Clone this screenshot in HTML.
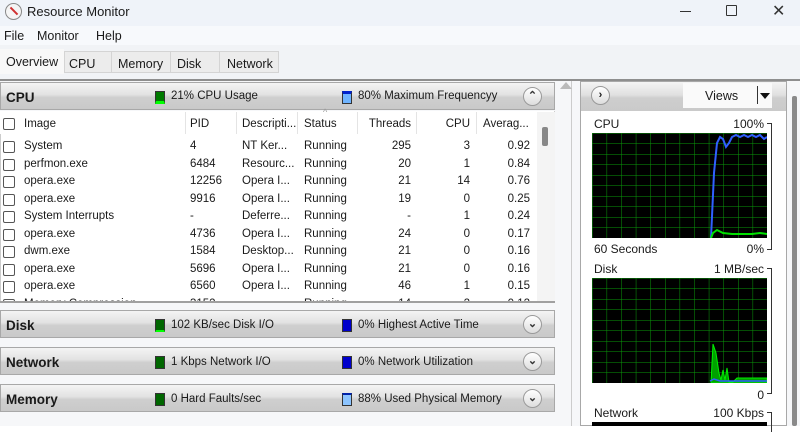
<!DOCTYPE html>
<html><head><style>
*{margin:0;padding:0;box-sizing:border-box}
body{width:800px;height:426px;overflow:hidden;background:#fff;font-family:"Liberation Sans",sans-serif;font-size:11.5px;color:#1a1a1a;position:relative}
.a{position:absolute;white-space:nowrap}
.hdr{position:absolute;left:0;width:555px;height:28px;border:1px solid #a8a8a8;background:linear-gradient(#f4f4f4,#e2e2e2 45%,#cfcfcf 55%,#c9c9c9);}
.hdr b{position:absolute;left:5px;top:7px;font-size:13.5px}
.sq{position:absolute;width:10px;height:13px;top:8px;border:1px solid #333}
.btn{position:absolute;right:12px;top:4px;width:19px;height:19px;border-radius:50%;border:1px solid #9a9a9a;background:linear-gradient(#fff,#ddd);font-size:11px;text-align:center;line-height:17px;font-weight:bold;color:#333}
.cb{position:absolute;left:3px;width:12px;height:12px;border:1px solid #555;border-radius:2px;background:#fff}
.r{text-align:right}
</style></head><body>
<div class="a" style="left:0;top:0;width:800px;height:26px;background:#eff3f9"></div>
<div class="a" style="left:5px;top:3px;width:17px;height:17px;border-radius:50%;border:1px solid #888;background:#f5f5f5"></div>
<div class="a" style="left:9px;top:10px;width:10px;height:2px;background:#d03030;transform:rotate(45deg)"></div>
<div class="a" style="left:27px;top:4px;font-size:13px">Resource Monitor</div>
<div class="a" style="left:680px;top:11px;width:11px;height:1px;background:#333"></div>
<div class="a" style="left:726px;top:5px;width:11px;height:11px;border:1px solid #333;border-radius:1px"></div>
<div class="a" style="left:772px;top:1px;font-size:16px;color:#333">✕</div>
<div class="a" style="left:0;top:26px;width:800px;height:19px;background:#f7f9fc"></div>
<div class="a" style="left:4px;top:29px;font-size:12.5px">File</div>
<div class="a" style="left:37px;top:29px;font-size:12.5px">Monitor</div>
<div class="a" style="left:96px;top:29px;font-size:12.5px">Help</div>
<div class="a" style="left:0;top:45px;width:800px;height:34px;background:#f1f3f6"></div>
<div class="a" style="left:64px;top:51px;width:215px;height:22px;background:#ececec;border:1px solid #d4d4d4"></div>
<div class="a" style="left:111px;top:51px;width:1px;height:22px;background:#d4d4d4"></div>
<div class="a" style="left:170px;top:51px;width:1px;height:22px;background:#d4d4d4"></div>
<div class="a" style="left:219px;top:51px;width:1px;height:22px;background:#d4d4d4"></div>
<div class="a" style="left:0;top:49px;width:64px;height:25px;background:#f8f8f8"></div>
<div class="a" style="left:6px;top:55px;font-size:12.5px">Overview</div>
<div class="a" style="left:69px;top:57px;font-size:12.5px">CPU</div>
<div class="a" style="left:118px;top:57px;font-size:12.5px">Memory</div>
<div class="a" style="left:177px;top:57px;font-size:12.5px">Disk</div>
<div class="a" style="left:227px;top:57px;font-size:12.5px">Network</div>
<div class="a" style="left:0;top:79px;width:800px;height:2px;background:#8e8e8e"></div>
<div class="a" style="left:0;top:81px;width:800px;height:345px;background:#f6f7f9"></div>
<div class="hdr" style="top:82px"><b>CPU</b>
<div class="sq" style="left:154px;background:#007a00;border-bottom:3px solid #00ff00"></div><div class="a" style="left:170px;top:7px">21% CPU Usage</div>
<div class="sq" style="left:341px;background:#6fb4ff;border-top:3px solid #0022cc"></div><div class="a" style="left:357px;top:7px">80% Maximum Frequencyy</div>
<div class="btn">⌃</div></div>
<div class="a" style="left:0;top:111px;width:555px;height:190px;background:#fff;border-left:1px solid #ccc;border-right:1px solid #ccc"></div>
<div class="a" style="left:0;top:111px;width:538px;height:23px;background:#fff"></div>
<div class="cb" style="top:118px"></div>
<div class="a" style="left:24px;top:118px">Image</div>
<div class="a" style="left:185px;top:112px;width:1px;height:22px;background:#e4e4e4"></div>
<div class="a" style="left:190px;top:118px">PID</div>
<div class="a" style="left:236px;top:112px;width:1px;height:22px;background:#e4e4e4"></div>
<div class="a" style="left:242px;top:118px">Descripti...</div>
<div class="a" style="left:297px;top:112px;width:1px;height:22px;background:#e4e4e4"></div>
<div class="a" style="left:304px;top:118px">Status</div>
<div class="a" style="left:323px;top:107px;font-size:9px;color:#999">^</div>
<div class="a" style="left:357px;top:112px;width:1px;height:22px;background:#e4e4e4"></div>
<div class="a r" style="left:360px;width:51px;top:118px">Threads</div>
<div class="a" style="left:416px;top:112px;width:1px;height:22px;background:#e4e4e4"></div>
<div class="a r" style="left:420px;width:50px;top:118px">CPU</div>
<div class="a" style="left:476px;top:112px;width:1px;height:22px;background:#e4e4e4"></div>
<div class="a" style="left:483px;top:118px">Averag...</div>
<div class="a" style="left:537px;top:112px;width:18px;height:189px;background:#f4f4f4"></div>
<div class="a" style="left:542px;top:127px;width:6px;height:19px;background:#888;border-radius:2px"></div>
<div id="rows"></div>
<div class="a" style="left:0;top:301px;width:555px;height:2px;background:#a0a0a0"></div>
<div class="hdr" style="top:310px"><b>Disk</b>
<div class="sq" style="left:154px;background:#006600;border-bottom:2px solid #00ff00"></div><div class="a" style="left:170px;top:8px">102 KB/sec Disk I/O</div>
<div class="sq" style="left:341px;background:#0000cc"></div><div class="a" style="left:357px;top:8px">0% Highest Active Time</div>
<div class="btn">⌄</div></div>
<div class="hdr" style="top:347px"><b>Network</b>
<div class="sq" style="left:154px;background:#006600"></div><div class="a" style="left:170px;top:8px">1 Kbps Network I/O</div>
<div class="sq" style="left:341px;background:#0000cc"></div><div class="a" style="left:357px;top:8px">0% Network Utilization</div>
<div class="btn">⌄</div></div>
<div class="hdr" style="top:384px"><b>Memory</b>
<div class="sq" style="left:154px;background:#006600"></div><div class="a" style="left:170px;top:8px">0 Hard Faults/sec</div>
<div class="sq" style="left:341px;background:#8cc4ff;border-top:2px solid #0022aa"></div><div class="a" style="left:357px;top:8px">88% Used Physical Memory</div>
<div class="btn">⌄</div></div>
<div class="a" style="left:571px;top:81px;width:1px;height:345px;background:#ccc"></div>
<div class="a" style="left:560px;top:82px;width:0;height:0;border-left:6px solid transparent;border-right:6px solid transparent;border-bottom:7px solid #bbb"></div>
<div class="a" style="left:580px;top:81px;width:207px;height:345px;background:#fff;border:1px solid #a8a8a8"></div>
<div class="a" style="left:581px;top:82px;width:205px;height:29px;background:linear-gradient(#f4f4f4,#e0e0e0 45%,#cecece 55%,#cacaca)"></div>
<div class="a" style="left:591px;top:86px;width:19px;height:19px;border-radius:50%;border:1px solid #999;background:linear-gradient(#fff,#ddd);text-align:center;line-height:17px;font-weight:bold;font-size:11px">›</div>
<div class="a" style="left:683px;top:83px;width:89px;height:25px;background:#fafafa"></div>
<div class="a" style="left:705px;top:89px;font-size:12.5px">Views</div>
<div class="a" style="left:757px;top:86px;width:1px;height:18px;background:#333"></div>
<div class="a" style="left:760px;top:93px;border-left:5px solid transparent;border-right:5px solid transparent;border-top:6px solid #111"></div>
<div class="a" style="left:792px;top:96px;width:5px;height:330px;background:#8a8a8a;border-radius:2px"></div>
<div class="a" style="left:594px;top:117px;font-size:12px">CPU</div>
<div class="a r" style="left:700px;width:64px;top:117px;font-size:12px">100%</div>
<div class="a" style="left:767px;top:123px;width:5px;height:127px;border:1px solid #333;border-left:none"></div>
<svg class="a" style="left:592px;top:133px" width="175" height="105">
<defs><pattern id="g" width="14.6" height="10.5" patternUnits="userSpaceOnUse"><path d="M0 0H14.6M0 0V10.5" stroke="#0a9a0a" stroke-width="1" fill="none"/></pattern></defs>
<rect width="175" height="105" fill="#000"/><rect width="175" height="105" fill="url(#g)"/>
<polyline points="119,105 122,40 125,10 128,4 131,6 134,14 137,10 140,4 144,2 148,4 152,2 156,4 160,2 164,4 168,2 172,6 175,4" fill="none" stroke="#3060ff" stroke-width="2"/>
<polyline points="119,105 121,100 125,97 131,100 140,101 160,101 168,100 175,101" fill="none" stroke="#00e000" stroke-width="2"/>
</svg>
<div class="a" style="left:594px;top:242px;font-size:12px">60 Seconds</div>
<div class="a r" style="left:720px;width:44px;top:242px;font-size:12px">0%</div>
<div class="a" style="left:594px;top:262px;font-size:12px">Disk</div>
<div class="a r" style="left:700px;width:64px;top:262px;font-size:12px">1 MB/sec</div>
<div class="a" style="left:767px;top:268px;width:5px;height:126px;border:1px solid #333;border-left:none"></div>
<svg class="a" style="left:592px;top:278px" width="175" height="105">
<rect width="175" height="105" fill="#000"/><rect width="175" height="105" fill="url(#g)"/>
<polygon points="119,105 120,85 121,66 124,75 127,95 129,102 131,92 133,102 135,90 137,104 141,104 145,100 160,100 175,100 175,105" fill="#00a000" stroke="#00ee00" stroke-width="1"/>
<polyline points="118,103 122,101 128,103 175,103" fill="none" stroke="#3060ff" stroke-width="1.5"/>
</svg>
<div class="a r" style="left:720px;width:44px;top:388px;font-size:12px">0</div>
<div class="a" style="left:594px;top:406px;font-size:12px">Network</div>
<div class="a r" style="left:700px;width:64px;top:406px;font-size:12px">100 Kbps</div>
<div class="a" style="left:767px;top:412px;width:5px;height:20px;border:1px solid #333;border-left:none;border-bottom:none"></div>
<div class="a" style="left:592px;top:422px;width:175px;height:4px;background:#000"></div>
<script>
var d=[["System","4","NT Ker...","295","3","0.92"],["perfmon.exe","6484","Resourc...","20","1","0.84"],["opera.exe","12256","Opera I...","21","14","0.76"],["opera.exe","9916","Opera I...","19","0","0.25"],["System Interrupts","-","Deferre...","-","1","0.24"],["opera.exe","4736","Opera I...","24","0","0.17"],["dwm.exe","1584","Desktop...","21","0","0.16"],["opera.exe","5696","Opera I...","21","0","0.16"],["opera.exe","6560","Opera I...","46","1","0.15"],["Memory Compression","3152","","14","2","0.12"]];
var h="";d.forEach(function(r,i){var y=140+i*17.5;var st=i<9?"":"clip-path:inset(0 0 70% 0);";
h+='<div class="a" style="left:0;top:'+y+'px;width:536px;height:15px;'+st+'"><div class="cb" style="top:1px"></div><div class="a" style="left:24px;top:0">'+r[0]+'</div><div class="a" style="left:190px;top:0">'+r[1]+'</div><div class="a" style="left:242px;top:0">'+r[2]+'</div><div class="a" style="left:304px;top:0">Running</div><div class="a r" style="left:360px;width:51px;top:0">'+r[3]+'</div><div class="a r" style="left:420px;width:50px;top:0">'+r[4]+'</div><div class="a r" style="left:480px;width:50px;top:0">'+r[5]+'</div></div>';});
document.getElementById("rows").innerHTML=h;
</script>
</body></html>
